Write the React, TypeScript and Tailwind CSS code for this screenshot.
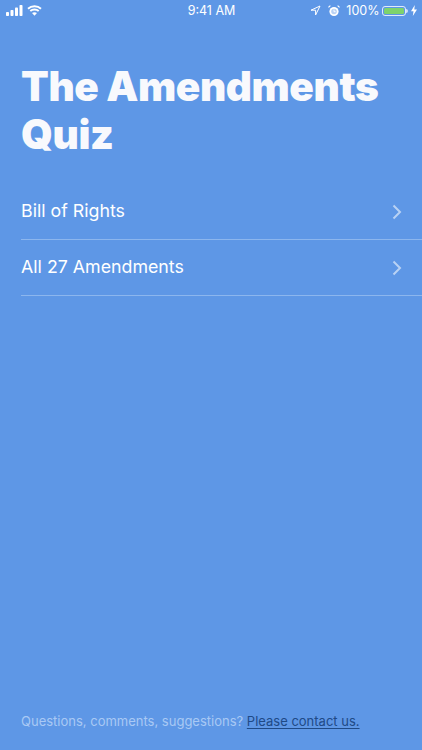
export default function App() {
  const font = { fontFamily: 'Inter, "Liberation Sans", sans-serif' };
  return (
    <div className="w-[422px] h-[750px] bg-[#5e97e6] flex flex-col text-white overflow-hidden" style={font}>
      <div className="h-5 flex items-center justify-between shrink-0 pl-[6px] pr-[5px] pt-[1px]">
        <div className="w-[130px] flex items-center gap-[3px] -mt-[1px]">
          <svg width="18" height="11" viewBox="0 0 18 11" fill="white">
            <rect x="0" y="7" width="3" height="4" rx="0.8" />
            <rect x="4.5" y="5" width="3" height="6" rx="0.8" />
            <rect x="9" y="2.5" width="3" height="8.5" rx="0.8" />
            <rect x="13.5" y="0" width="3" height="11" rx="0.8" />
          </svg>
          <svg width="15" height="11" viewBox="0 0 15 11" fill="none" stroke="white" strokeWidth="1.9">
            <path d="M1 3.8C4.6 0.4 10.4 0.4 14 3.8" />
            <path d="M3.3 6C5.6 3.9 9.4 3.9 11.7 6" />
            <path d="M7.5 10.8L5 8.1C6.4 7 8.6 7 10 8.1Z" fill="white" stroke="none" />
          </svg>
        </div>
        <div className="text-[12.5px] font-normal leading-none mt-[2px]">9:41 AM</div>
        <div className="w-[130px] flex items-center justify-end">
          <svg width="11" height="11" viewBox="0 0 11 11" fill="none" stroke="white" strokeWidth="1" className="mr-[7px]">
            <path d="M10 1L1 5.2H5.6V10Z" strokeLinejoin="round" />
          </svg>
          <svg width="12" height="12" viewBox="0 0 12 12" fill="white" className="mr-[6px]">
            <circle cx="6" cy="6.5" r="4.6" />
            <circle cx="6" cy="6.5" r="2.8" fill="#b9d2f4" />
            <path d="M6 4.5V6.7H7.6" stroke="white" strokeWidth="0.9" fill="none" />
            <path d="M0.6 3L3 0.8L1.6 0.4L0.4 1.6ZM11.4 3L9 0.8L10.4 0.4L11.6 1.6Z" />
          </svg>
          <span className="text-[12.5px] leading-none mr-[3px] mt-[2px]">100%</span>
          <div className="w-[24px] h-[10px] border border-white/80 rounded-[3px] p-[1px] flex">
            <div className="flex-1 bg-[#7ed36c] rounded-[1.5px]" />
          </div>
          <div className="w-[1.5px] h-[4px] bg-white/70 rounded-r-sm mr-[3px]" />
          <svg width="6" height="11" viewBox="0 0 6 11" fill="white">
            <path d="M3.8 0L0 6.2H2.5L1.8 11L6 4.4H3.3Z" />
          </svg>
        </div>
      </div>

      <h1 className="mt-[43px] ml-[21px] text-[40.5px] leading-[48px] font-black tracking-[-0.4px] text-[#f8f9fd]">
        The Amendments<br />Quiz
      </h1>

      <div className="mt-[25px] ml-[21px]">
        {["Bill of Rights", "All 27 Amendments"].map((t) => (
          <div key={t} className="h-[56px] flex items-center justify-between border-b border-[#8cb6ee] pr-[20px] text-[17.8px]">
            <span>{t}</span>
            <svg width="10" height="16" viewBox="0 0 10 16" fill="none" stroke="#b9d2f4" strokeWidth="2">
              <path d="M1.5 1.5L8 8L1.5 14.5" />
            </svg>
          </div>
        ))}
      </div>

      <div className="mt-auto mb-[20px] ml-[21px] text-[13px] leading-[18px] text-[#a9c9f4]">
        Questions, comments, suggestions?{" "}
        <span className="text-[#1f4a86] underline underline-offset-2">Please contact us.</span>
      </div>
    </div>
  );
}
